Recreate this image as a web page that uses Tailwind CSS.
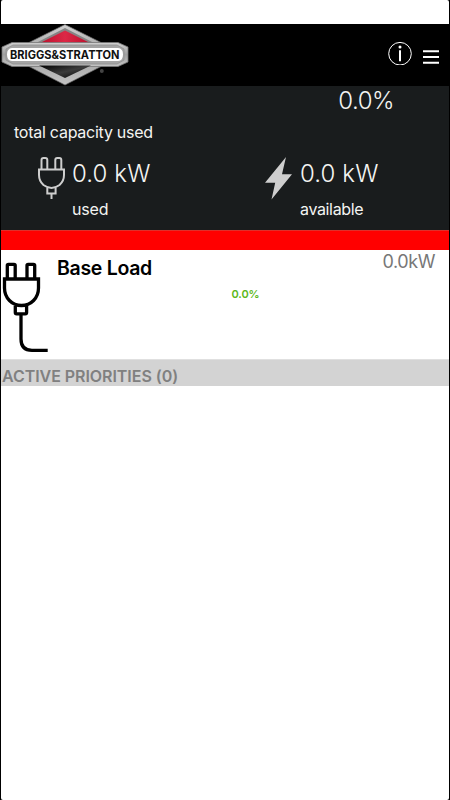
<!DOCTYPE html>
<html lang="en">
<head>
  <meta charset="UTF-8" />
  <meta name="viewport" content="width=device-width, initial-scale=1" />
  <title>Power Management</title>
  <script src="https://cdn.jsdelivr.net/npm/@tailwindcss/browser@4"></script>
</head>
<body class="bg-black font-['Inter','Liberation_Sans',sans-serif]">
  <div class="flex flex-col w-[448px] h-[800px] ml-px pt-6 bg-white rounded-[2px] overflow-hidden">

    <header class="flex items-start justify-between h-[62px] shrink-0 bg-black">
      <!-- Logo -->
      <svg class="w-[130px] h-[62px]" viewBox="1 24 130 62" role="img" aria-label="Briggs &amp; Stratton">
        <defs>
          <linearGradient id="steel" x1="0" y1="0" x2="0" y2="1">
            <stop offset="0" stop-color="#d0d0d0" />
            <stop offset=".5" stop-color="#a0a0a0" />
            <stop offset="1" stop-color="#c4c4c4" />
          </linearGradient>
          <linearGradient id="red" x1="0" y1="0" x2="1" y2="0">
            <stop offset="0" stop-color="#b80f2b" />
            <stop offset=".5" stop-color="#dc2846" />
            <stop offset="1" stop-color="#b80f2b" />
          </linearGradient>
          <linearGradient id="dark" x1="0" y1="0" x2="1" y2="1">
            <stop offset="0" stop-color="#000" />
            <stop offset=".5" stop-color="#3c3c3c" />
            <stop offset="1" stop-color="#000" />
          </linearGradient>
        </defs>
        <path d="M65 24.5 101 42.5V66.5L65 85 29 66.5V42.5Z" fill="url(#steel)" stroke="#666" stroke-width=".7" />
        <path d="M65 28 94 43H36Z" fill="#858585" />
        <path d="M65 30.5 92 44H38Z" fill="url(#red)" />
        <path d="M12 42.5H118L128 47V62L118 66.5H12L2 62V47Z" fill="url(#steel)" stroke="#777" stroke-width=".8" />
        <path d="M39 65.5H91L65 78Z" fill="url(#dark)" />
        <path d="M13 45H117L124 49V60L117 64H13L6 60V49Z" fill="#a5a5a5" stroke="#8c8c8c" stroke-width=".7" />
        <path d="M12 48H118Q123 48.5 123 54.5T118 61H12Q7 60.5 7 54.5T12 48Z" fill="#fff" />
        <text x="10" y="58.8" font-family="Inter, sans-serif" font-size="11.5" font-weight="700" fill="#111" textLength="109.5" lengthAdjust="spacingAndGlyphs">BRIGGS&amp;STRATTON</text>
        <circle cx="101.8" cy="71" r="2" fill="#444" />
      </svg>

      <div class="flex items-center gap-[11px] pt-[17px] pr-[10px]">
        <svg class="w-6 h-6" viewBox="0 0 24 24" fill="none" stroke="#fff">
          <circle cx="12" cy="12.7" r="11.3" stroke-width="1" />
          <path d="M12 9.3V20.3" stroke-width="2" />
          <circle cx="12" cy="6" r="1.5" fill="#fff" stroke="none" />
        </svg>
        <svg class="w-4 h-6" viewBox="0 0 16 24" stroke="#fff" stroke-width="2">
          <path d="M0 10.2H16M0 16H16M0 21.7H16" />
        </svg>
      </div>
    </header>

    <section class="h-36 shrink-0 bg-[#191c1d] text-[#f4f4f2]">
      <div class="pt-px pr-[55px] text-right text-2xl leading-7 font-light tracking-[-0.5px]">0.0%</div>
      <div class="mt-[5px] pl-[13px] text-base leading-6 tracking-[-0.25px]">total capacity used</div>
      <div class="flex pt-[13px]">
        <div class="flex w-[227px] pl-9">
          <svg class="w-[29px] h-[43px] shrink-0" viewBox="0 0 29 43" fill="none" stroke="#cecece" stroke-width="2">
            <path d="M4.5 12V3Q4.5 1 6.5 1H8.3Q10.3 1 10.3 3V12M18.3 12V3Q18.3 1 20.3 1H22.3Q24.3 1 24.3 3V12" />
            <path d="M2 12.5H27V18Q27 24 22.5 28Q18.5 31 14.5 31T6.5 28Q2 24 2 18Z" />
            <path d="M10.3 31V36.5H18.6V31M14.5 36.5V42" />
          </svg>
          <div class="pt-px pl-1.5">
            <div class="text-2xl leading-8 font-light tracking-[0.1px]">0.0 kW</div>
            <div class="mt-[7px] text-base leading-6 tracking-[-0.2px]">used</div>
          </div>
        </div>
        <div class="flex pl-9">
          <svg class="w-[29px] h-[43px] shrink-0" viewBox="0 0 29 43">
            <path d="M22 0 1 25.7H11.2L7.5 42.5 28 17.3H18Z" fill="#cecece" />
          </svg>
          <div class="pt-px pl-[7px]">
            <div class="text-2xl leading-8 font-light tracking-[0.1px]">0.0 kW</div>
            <div class="mt-[7px] text-base leading-6 tracking-[-0.35px]">available</div>
          </div>
        </div>
      </div>
    </section>

    <div class="h-5 shrink-0 bg-[#ff0000] border-t border-[#df2f2a]"></div>

    <section class="flex h-[109px] shrink-0">
      <svg class="w-12 h-[104px] shrink-0" viewBox="1 250 48 104" fill="none" stroke="#000" stroke-width="3.3">
        <path d="M7.3 278V265.5Q7.3 264.3 8.5 264.3H14Q15.2 264.3 15.2 265.5V278M27 278V265.5Q27 264.3 28.2 264.3H33.5Q34.7 264.3 34.7 265.5V278" />
        <path d="M4.5 279H38.5V288C38.5 298 31 305.5 21.5 305.5S4.5 298 4.5 288Z" />
        <path d="M15.3 306V312.5Q15.3 313.8 16.6 313.8H25.3Q26.6 313.8 26.6 312.5V306" />
        <path d="M21 314V339Q21 350.3 32 350.3H47.7" />
      </svg>
      <div class="w-[150px] pt-1 pl-2 text-[19.5px] leading-7 font-semibold tracking-[-0.3px] text-black">Base Load</div>
      <div class="w-20 pt-9 pl-[32.5px] text-[11px] leading-4 font-semibold tracking-[-0.1px] text-[#5cb81c]">0.0%</div>
      <div class="flex-1 pt-px pr-[14px] text-right text-[18px] leading-[22px] tracking-[-0.4px] text-[#777]">0.0kW</div>
    </section>

    <h2 class="h-[27px] shrink-0 pt-[5px] pl-px border-t border-[#e0e0e0] bg-[#d3d3d3] text-base leading-[23px] font-semibold tracking-[-0.05px] text-[#808080]">ACTIVE PRIORITIES (0)</h2>
  </div>
</body>
</html>
